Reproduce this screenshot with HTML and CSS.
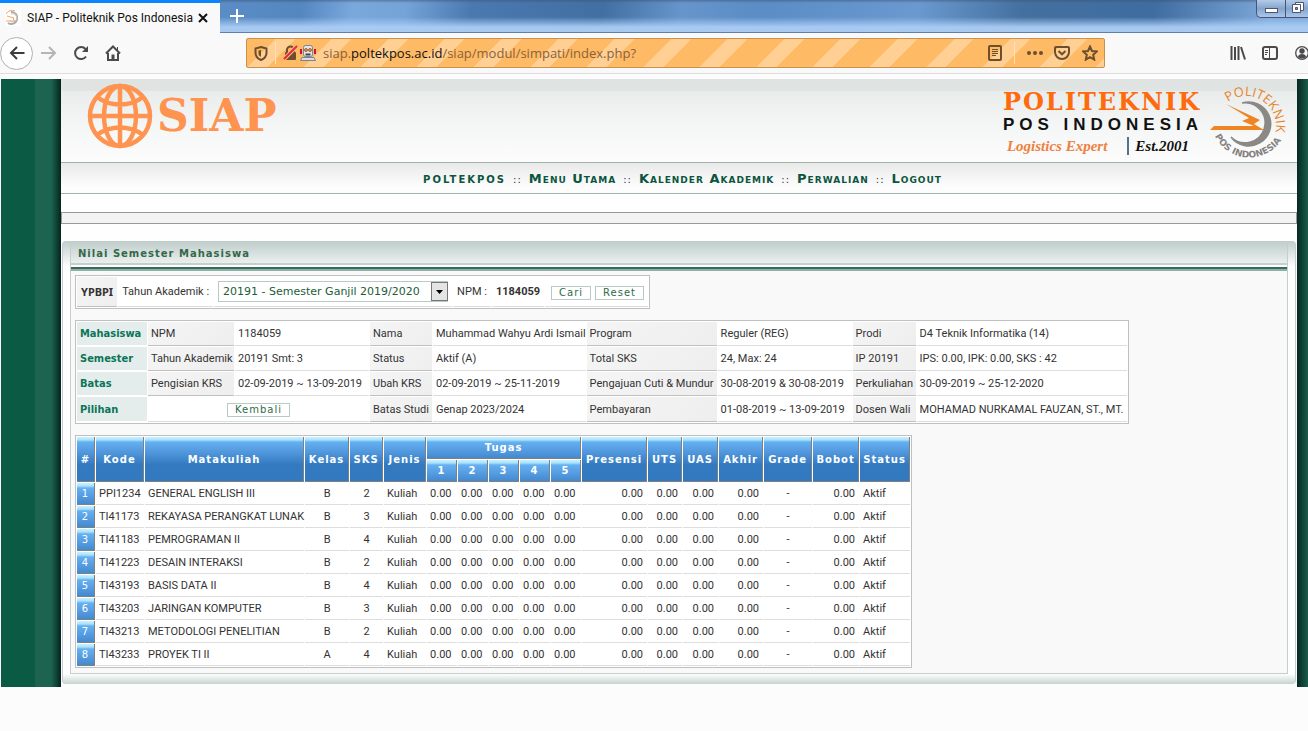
FILE: index.html
```html
<!DOCTYPE html>
<html lang="id">
<head>
<meta charset="utf-8">
<title>SIAP - Politeknik Pos Indonesia</title>
<link rel="stylesheet" href="styles.css">
</head>
<body>
<header class="browser">
  <div class="titlebar">
    <div class="tab">
      <svg class="favicon" viewBox="0 0 16 16"><rect width="16" height="16" fill="#fff"/><path d="M6 2a6 6 0 1 1-3 11" fill="none" stroke="#aaa" stroke-width="2"/><path d="M6 4a4.200 4.200 0 1 1-1 7" fill="none" stroke="#ccc" stroke-width="1"/><path d="M1 4a7 7 0 0 1 9-3M2 6l7 2-1 1 2 2H1" fill="none" stroke="#f4a56a"/></svg>
      <span class="tab-title">SIAP - Politeknik Pos Indonesia</span>
      <button class="plain" aria-label="Close tab"><svg width="10" height="10" viewBox="0 0 10 10"><path d="M1 1l8 8M9 1L1 9" stroke="#111" stroke-width="2"/></svg></button>
    </div>
    <button class="plain new-tab" aria-label="New tab"><svg width="14" height="14" viewBox="0 0 14 14"><path d="M7 0v14M0 7h14" stroke="#fff" stroke-width="2"/></svg></button>
    <div class="window-buttons">
      <button class="plain" aria-label="Minimize"><svg width="28" height="17" viewBox="0 0 28 17"><rect x="8.500" y="8.500" width="12" height="4" fill="#fff" stroke="#4b5670"/></svg></button>
      <button class="plain" aria-label="Restore"><svg width="22" height="17" viewBox="0 0 22 17"><path d="M9.500 2.500h8v8h-8z" fill="#fff" stroke="#4b5670"/><path d="M6.500 4.500h8v8h-8z" fill="#fff" stroke="#4b5670"/><path d="M9.500 7.500h2v2h-2z" fill="#7f9cc4" stroke="#4b5670"/></svg></button>
    </div>
  </div>
  <div class="toolbar">
    <div class="nav-buttons">
      <button class="plain back" aria-label="Back"><svg width="16" height="14" viewBox="0 0 16 14"><path d="M15.500 7H2M8 1L2 7l6 6" fill="none" stroke="#3c3c3e" stroke-width="2"/></svg></button>
      <button class="plain" aria-label="Forward"><svg width="16" height="14" viewBox="0 0 16 14"><path d="M0 7h14M8 1l6 6-6 6" fill="none" stroke="#b5b5b6" stroke-width="2"/></svg></button>
      <button class="plain" aria-label="Reload"><svg width="16" height="16" viewBox="0 0 16 16"><path d="M13 11.500A6 6 0 1 1 12.500 4" fill="none" stroke="#4a4a4c" stroke-width="2"/><path d="M15 1v6H9z" fill="#4a4a4c"/></svg></button>
      <button class="plain" aria-label="Home"><svg width="16" height="16" viewBox="0 0 16 16"><path d="M1 8.500L8 1.500l7 7M3 8v7h10V8" fill="none" stroke="#4a4a4c" stroke-width="2"/><path d="M6.500 15V9.500h3V15" fill="#4a4a4c"/><path d="M12 2h1v3h-1z" fill="#4a4a4c"/></svg></button>
    </div>
    <div class="address">
      <svg width="14" height="15" viewBox="0 0 14 15"><path d="M7 1l5.500 1.500V7c0 3.500-2.500 5.700-5.500 7-3-1.300-5.500-3.500-5.500-7V2.500z" fill="none" stroke="#6b5030" stroke-width="2"/><path d="M7 4v7C5.300 10 4.500 9 4.500 7V4.500z" fill="#6b5030"/></svg>
      <i class="divider"></i>
      <svg class="lock" width="16" height="16" viewBox="0 0 16 16"><path d="M4 8V5a3.500 3.500 0 0 1 7 0v3" fill="none" stroke="#6b5030" stroke-width="2"/><rect x="2" y="7" width="11" height="8" rx="1" fill="#6b5030"/><path d="M1 14L14 1" stroke="#ffbd6b" stroke-width="4"/><path d="M1 14L14 1" stroke="#f0204c" stroke-width="2"/></svg>
      <svg width="16" height="16" viewBox="0 0 16 16"><path d="M0 4h2v5H0zM14 4h2v5h-2z" fill="#c8143c"/><rect x="3.500" y=".5" width="9" height="11" rx="2" fill="#dfe6ee" stroke="#7b8591"/><circle cx="6" cy="5" r="1.500" fill="#f7931e" stroke="#70402a" stroke-width=".7"/><circle cx="10" cy="5" r="1.500" fill="#f7931e" stroke="#70402a" stroke-width=".7"/><path d="M5.500 8.500h5v2h-5z" fill="#444"/><path d="M2 12.500h12l1.500 3H.5z" fill="#d5dce5" stroke="#7b8591"/></svg>
      <label class="url" for="url"><span>siap.</span><b>poltekpos.ac.id</b><span>/siap/modul/simpati/index.php?</span></label>
      <input id="url" class="url-input" type="text" aria-label="Address">
      <svg width="14" height="16" viewBox="0 0 14 16"><rect x="1" y="1" width="12" height="14" rx="1" fill="none" stroke="#6b5030" stroke-width="2"/><path d="M4 4.500h6M4 6.500h6M4 8.500h6M4 10.500h4" stroke="#6b5030"/></svg>
      <i class="divider far"></i>
      <svg class="dots" width="16" height="4" viewBox="0 0 16 4"><circle cx="2" cy="2" r="2" fill="#6b5030"/><circle cx="8" cy="2" r="2" fill="#6b5030"/><circle cx="14" cy="2" r="2" fill="#6b5030"/></svg>
      <svg width="16" height="14" viewBox="0 0 16 14"><path d="M2 1h12a1 1 0 0 1 1 1v4A7 7 0 0 1 1 6V2a1 1 0 0 1 1-1z" fill="none" stroke="#6b5030" stroke-width="2"/><path d="M4.500 5L8 8.300 11.500 5" fill="none" stroke="#6b5030" stroke-width="2"/></svg>
      <svg class="star" width="16" height="16" viewBox="0 0 16 16"><path d="M8 1.500l2 4.500 4.800.500-3.600 3.300 1 4.800L8 12.200l-4.200 2.400 1-4.800L1.200 6.500 6 6z" fill="none" stroke="#6b5030" stroke-width="2"/></svg>
    </div>
    <div class="tools">
      <button class="plain" aria-label="Library"><svg width="16" height="14" viewBox="0 0 16 14"><path d="M1.500 0v14M5 1v13M8.500 0v14M11 1l4 12.500" stroke="#4a4a4c" stroke-width="2"/></svg></button>
      <button class="plain" aria-label="Sidebar"><svg width="16" height="14" viewBox="0 0 16 14"><rect x="1" y="1" width="14" height="12" rx="2" fill="none" stroke="#4a4a4c" stroke-width="2"/><path d="M7.500 1v12M3 4.500h3M3 6.500h3M3 8.500h2" stroke="#4a4a4c"/></svg></button>
      <button class="plain" aria-label="Account"><svg width="14" height="14" viewBox="0 0 14 14"><circle cx="7" cy="7" r="6.300" fill="none" stroke="#4a4a4c" stroke-width="1.300"/><circle cx="7" cy="5" r="2.700" fill="#4a4a4c"/><path d="M3 11c0-4 8-4 8 0a6 6 0 0 1-8 0z" fill="#4a4a4c"/></svg></button>
    </div>
  </div>
</header>

<div class="site">
  <main class="page">
    <div class="banner">
      <div class="brand">
        <svg width="66" height="66" viewBox="0 0 66 66" fill="none" stroke="#ff9350" stroke-width="4.500"><circle cx="33" cy="33" r="30"/><ellipse cx="33" cy="33" rx="16" ry="30"/><path d="M33 3v60M2 33h62M10 14c13 10 33 10 46 0M10 52c13-10 33-10 46 0"/></svg>
        <span class="brand-name">SIAP</span>
      </div>
      <div class="campus">
        <div class="campus-text">
          <div class="campus-name">POLITEKNIK</div>
          <div class="campus-sub">POS INDONESIA</div>
          <div class="campus-motto"><span class="motto">Logistics Expert</span><span class="est">Est.2001</span></div>
        </div>
        <svg class="seal" width="82" height="78" viewBox="0 0 82 78">
          <path d="M34 21A20 20 0 1 1 23 55A22 22 0 1 0 34 21z" fill="#8b8885" stroke="#8b8885" stroke-width="1.500"/>
          <path d="M18 22L52 38 46 42 56 48H2L6 44 46 44 34 39 41 36z" fill="#f08322"/>
          <path id="arc-top" d="M20 20A30 30 0 0 1 65 57" fill="none"/>
          <path id="arc-bottom" d="M7 54A38 38 0 0 0 74 57" fill="none"/>
          <text class="seal-top"><textPath href="#arc-top">POLITEKNIK</textPath></text>
          <text class="seal-bottom"><textPath href="#arc-bottom">POS INDONESIA</textPath></text>
        </svg>
      </div>
    </div>
    <nav class="menu">
      <a class="home" href="#">POLTEKPOS</a><span>::</span><a href="#">Menu Utama</a><span>::</span><a href="#">Kalender Akademik</a><span>::</span><a href="#">Perwalian</a><span>::</span><a href="#">Logout</a>
    </nav>
    <div class="notice"></div>

    <section class="panel">
      <div class="panel-inner">
        <h1>Nilai Semester Mahasiswa</h1>
        <div class="stripe"></div>
        <div class="content">
          <form>
            <table class="grid filter">
              <tr>
                <th class="soft">YPBPI</th>
                <td><label for="term">Tahun Akademik :</label></td>
                <td><span class="picker"><select id="term"><option>20191 - Semester Ganjil 2019/2020</option></select><svg class="arrow" width="17" height="19" viewBox="0 0 17 19"><rect x=".5" y=".5" width="16" height="18" fill="#e4e4e4" stroke="#777"/><path d="M5 8h7l-3.500 4z" fill="#000"/></svg></span></td>
                <td>NPM :</td>
                <td><b>1184059</b></td>
                <td class="actions"><button class="btn" type="button">Cari</button><button class="btn" type="reset">Reset</button></td>
              </tr>
            </table>
          </form>

          <table class="grid info">
            <colgroup><col class="w70"><col class="w86"><col class="w134"><col class="w62"><col class="w151"><col class="w130"><col class="w134"><col class="w63"><col class="w210"></colgroup>
            <tr><th>Mahasiswa</th><td class="soft">NPM</td><td>1184059</td><td class="soft">Nama</td><td>Muhammad Wahyu Ardi Ismail</td><td class="soft">Program</td><td>Reguler (REG)</td><td class="soft">Prodi</td><td>D4 Teknik Informatika (14)</td></tr>
            <tr><th>Semester</th><td class="soft">Tahun Akademik</td><td>20191 Smt: 3</td><td class="soft">Status</td><td>Aktif (A)</td><td class="soft">Total SKS</td><td>24, Max: 24</td><td class="soft">IP 20191</td><td>IPS: 0.00, IPK: 0.00, SKS : 42</td></tr>
            <tr><th>Batas</th><td class="soft">Pengisian KRS</td><td>02-09-2019 ~ 13-09-2019</td><td class="soft">Ubah KRS</td><td>02-09-2019 ~ 25-11-2019</td><td class="soft">Pengajuan Cuti &amp; Mundur</td><td>30-08-2019 &amp; 30-08-2019</td><td class="soft">Perkuliahan</td><td>30-09-2019 ~ 25-12-2020</td></tr>
            <tr><th>Pilihan</th><td class="mid" colspan="2"><button class="btn" type="button">Kembali</button></td><td class="soft">Batas Studi</td><td>Genap 2023/2024</td><td class="soft">Pembayaran</td><td>01-08-2019 ~ 13-09-2019</td><td class="soft">Dosen Wali</td><td>MOHAMAD NURKAMAL FAUZAN, ST., MT.</td></tr>
          </table>

          <table class="grid grades">
            <colgroup><col class="w18"><col class="w48"><col class="w157"><col class="w44"><col class="w33"><col class="w42"><col class="w30" span="5"><col class="w65"><col class="w34"><col class="w35"><col class="w44"><col class="w48"><col class="w46"><col class="w50"></colgroup>
            <thead>
              <tr><th rowspan="2">#</th><th rowspan="2">Kode</th><th rowspan="2">Matakuliah</th><th rowspan="2">Kelas</th><th rowspan="2">SKS</th><th rowspan="2">Jenis</th><th colspan="5">Tugas</th><th rowspan="2">Presensi</th><th rowspan="2">UTS</th><th rowspan="2">UAS</th><th rowspan="2">Akhir</th><th rowspan="2">Grade</th><th rowspan="2">Bobot</th><th rowspan="2">Status</th></tr>
              <tr><th>1</th><th>2</th><th>3</th><th>4</th><th>5</th></tr>
            </thead>
            <tbody>
              <tr><th>1</th><td>PPI1234</td><td>GENERAL ENGLISH III</td><td class="mid">B</td><td class="mid">2</td><td>Kuliah</td><td>0.00</td><td>0.00</td><td>0.00</td><td>0.00</td><td>0.00</td><td class="num">0.00</td><td class="num">0.00</td><td class="num">0.00</td><td class="num">0.00</td><td class="mid">-</td><td class="num">0.00</td><td>Aktif</td></tr>
              <tr><th>2</th><td>TI41173</td><td>REKAYASA PERANGKAT LUNAK</td><td class="mid">B</td><td class="mid">3</td><td>Kuliah</td><td>0.00</td><td>0.00</td><td>0.00</td><td>0.00</td><td>0.00</td><td class="num">0.00</td><td class="num">0.00</td><td class="num">0.00</td><td class="num">0.00</td><td class="mid">-</td><td class="num">0.00</td><td>Aktif</td></tr>
              <tr><th>3</th><td>TI41183</td><td>PEMROGRAMAN II</td><td class="mid">B</td><td class="mid">4</td><td>Kuliah</td><td>0.00</td><td>0.00</td><td>0.00</td><td>0.00</td><td>0.00</td><td class="num">0.00</td><td class="num">0.00</td><td class="num">0.00</td><td class="num">0.00</td><td class="mid">-</td><td class="num">0.00</td><td>Aktif</td></tr>
              <tr><th>4</th><td>TI41223</td><td>DESAIN INTERAKSI</td><td class="mid">B</td><td class="mid">2</td><td>Kuliah</td><td>0.00</td><td>0.00</td><td>0.00</td><td>0.00</td><td>0.00</td><td class="num">0.00</td><td class="num">0.00</td><td class="num">0.00</td><td class="num">0.00</td><td class="mid">-</td><td class="num">0.00</td><td>Aktif</td></tr>
              <tr><th>5</th><td>TI43193</td><td>BASIS DATA II</td><td class="mid">B</td><td class="mid">4</td><td>Kuliah</td><td>0.00</td><td>0.00</td><td>0.00</td><td>0.00</td><td>0.00</td><td class="num">0.00</td><td class="num">0.00</td><td class="num">0.00</td><td class="num">0.00</td><td class="mid">-</td><td class="num">0.00</td><td>Aktif</td></tr>
              <tr><th>6</th><td>TI43203</td><td>JARINGAN KOMPUTER</td><td class="mid">B</td><td class="mid">3</td><td>Kuliah</td><td>0.00</td><td>0.00</td><td>0.00</td><td>0.00</td><td>0.00</td><td class="num">0.00</td><td class="num">0.00</td><td class="num">0.00</td><td class="num">0.00</td><td class="mid">-</td><td class="num">0.00</td><td>Aktif</td></tr>
              <tr><th>7</th><td>TI43213</td><td>METODOLOGI PENELITIAN</td><td class="mid">B</td><td class="mid">2</td><td>Kuliah</td><td>0.00</td><td>0.00</td><td>0.00</td><td>0.00</td><td>0.00</td><td class="num">0.00</td><td class="num">0.00</td><td class="num">0.00</td><td class="num">0.00</td><td class="mid">-</td><td class="num">0.00</td><td>Aktif</td></tr>
              <tr><th>8</th><td>TI43233</td><td>PROYEK TI II</td><td class="mid">A</td><td class="mid">4</td><td>Kuliah</td><td>0.00</td><td>0.00</td><td>0.00</td><td>0.00</td><td>0.00</td><td class="num">0.00</td><td class="num">0.00</td><td class="num">0.00</td><td class="num">0.00</td><td class="mid">-</td><td class="num">0.00</td><td>Aktif</td></tr>
            </tbody>
          </table>
        </div>
      </div>
    </section>
  </main>
</div>
</body>
</html>
```

FILE: styles.css
```css
* { box-sizing: border-box; }
body {
  margin: 0;
  background: #fcfcfc;
  color: #333;
  font: 11px/14px Roboto, "Liberation Sans", sans-serif;
  overflow-x: hidden;
}
svg { display: block; flex: none; }
.plain { border: 0; padding: 0; background: none; display: flex; align-items: center; justify-content: center; }

/* browser window */
.titlebar {
  display: flex;
  height: 33px;
  border-bottom: 1px solid #6080ac;
  background:
    linear-gradient(180deg, rgba(60,80,110,.5) 0, rgba(60,80,110,0) 3px, rgba(170,205,245,0) 17px, rgba(170,205,245,.95) 27px, #a9c9ee 100%),
    linear-gradient(100deg, #6c97cb 0, #5a8cc6 17%, #5486c0 23%, #79a8dd 27%, #74a3d8 31%, #4a79b0 36%, #426fa3 46%, #6595cb 52%, #5b8cc5 58%, #6a99d0 70%, #44709f 78%, #3f6ca1 88%, #7fa9da 97%);
}
.tab {
  display: flex;
  align-items: center;
  width: 220px;
  height: 33px;
  padding: 0 12px 0 5px;
  border-top: 3px solid #0a84ff;
  background: #f9f9f9;
}
.favicon { width: 16px; height: 16px; margin-right: 6px; }
.tab-title { flex: 1; font-size: 12px; color: #111; white-space: nowrap; }
.new-tab { width: 34px; height: 32px; }
.window-buttons {
  display: flex;
  height: 18px;
  margin-left: auto;
  border: 1px solid #46557a;
  border-width: 0 0 1px 1px;
  border-radius: 0 0 0 5px;
  background: linear-gradient(#b3cbe8, #86a5cc 50%, #a9c6ea);
}
.window-buttons button + button { border-left: 1px solid #46557a; }
.toolbar {
  display: flex;
  align-items: center;
  height: 41px;
  border-bottom: 1px solid #ddd;
  background: #f9f9fa;
}
.nav-buttons { display: flex; align-items: center; gap: 16px; width: 246px; }
.back { width: 33px; height: 33px; border: 1px solid #b0b0b0; border-radius: 50%; background: #fff; }
.nav-buttons .back { margin-right: -8px; }
.address {
  position: relative;
  flex: 1;
  display: flex;
  align-items: center;
  gap: 7px;
  height: 30px;
  padding: 0 6px 0 7px;
  border: 1px solid #c8914c;
  border-radius: 2px;
  background: repeating-linear-gradient(135deg, #ffba66 0, #ffba66 20px, #ffcf94 20px, #ffcf94 34px, #ffba66 34px, #ffba66 40px);
}
.divider { width: 1px; height: 22px; background: #ffe0b8; }
.divider.far { margin-left: 5px; }
.lock { margin-right: -6px; }
.url { flex: 1; font: 13px/18px "Open Sans", "Noto Sans", sans-serif; color: #8a6238; white-space: nowrap; }
.url b { font-weight: 400; color: #111; }
.url-input { position: absolute; left: 72px; top: 0; width: 60%; height: 28px; border: 0; background: transparent; }
.dots { margin: 0 4px 0 5px; }
.star { margin-left: 5px; }
.tools { display: flex; align-items: center; gap: 16px; width: 203px; padding-left: 125px; }
.tools button { flex: none; width: 16px; }

/* page frame */
.site {
  display: flex;
  margin: 5px 0 0 1px;
  padding: 0 11px 0 60px;
  background:
    linear-gradient(90deg, #0b5a44 0, #0b5a44 34px, #1c644f 34px, #1c644f 50px, #0b4032 56px, #07221c 60px) left / 60px 100% no-repeat,
    linear-gradient(90deg, #072820, #1a5c49) right / 11px 100% no-repeat;
}
.page { flex: 1; min-width: 0; background: linear-gradient(#fff, #fcfcfc); padding-bottom: 3px; }
.banner {
  display: flex;
  justify-content: space-between;
  height: 84px;
  padding: 3px 7px 0 26px;
  border-bottom: 1px solid #9fb5ac;
  background: linear-gradient(#dfe4e2, #e0e5e3 12px, #e8eceb 12px, #f4f6f5 45px, #fcfcfc);
}
.brand { display: flex; align-items: center; gap: 4px; height: 68px; color: #ff9350; }
.brand-name { font: 700 44px/48px "DejaVu Serif", serif; }
.campus { display: flex; gap: 5px; }
.campus-text { padding-top: 6px; white-space: nowrap; }
.campus-name { font: 700 24px/28px "DejaVu Serif", serif; letter-spacing: 2px; color: #ff6a0c; }
.campus-sub { font: 700 17px/18px "Liberation Sans", sans-serif; letter-spacing: 5px; color: #111; }
.campus-motto { display: flex; align-items: center; gap: 20px; padding: 2px 8px 0 4px; }
.motto { font: italic 700 15px/20px "Liberation Serif", serif; color: #f08040; }
.est { padding-left: 6px; border-left: 2px solid #54728a; font: italic 700 15px/18px "Liberation Serif", serif; color: #111; }
.seal-top { font: 13px "Open Sans", sans-serif; fill: #e8842c; }
.seal-bottom { font: 700 9px "DejaVu Sans", sans-serif; fill: #85817e; }
.menu {
  display: flex;
  align-items: baseline;
  justify-content: center;
  gap: 7px;
  height: 31px;
  padding: 9px 0 0 7px;
  border-bottom: 1px solid #9fb5ac;
  background: linear-gradient(#e9e9e9, #fdfdfd 80%);
  font: 700 13px/14px "DejaVu Sans", sans-serif;
  letter-spacing: 1px;
}
.menu a { color: #0b5540; text-decoration: none; font-variant: small-caps; }
.menu .home { font-size: 10px; letter-spacing: 2px; }
.menu span { font-size: 10px; font-weight: 400; }
.notice { height: 12px; margin: 18px 0 17px; border: 1px solid #999; background: #f3f3f3; }

/* content panel */
.panel {
  margin: 0 1px;
  padding: 0 7px 10px;
  border-right: 1px solid #c4cecc;
  border-left: 1px solid #c4cecc;
  border-radius: 4px;
  background:
    linear-gradient(#c0cecb, rgba(255,255,255,0)) top / 100% 26px no-repeat,
    linear-gradient(rgba(255,255,255,0), #c6d3cf) bottom / 100% 10px no-repeat,
    #fff;
}
.panel-inner { border: 1px solid #c4cecc; border-top: 0; }
h1 {
  margin: 0;
  padding: 6px 7px 2px;
  border-bottom: 2px solid #c4d0cd;
  background: linear-gradient(#bfcdca, #eaefee);
  color: #356749;
  font: 700 10px/14px "DejaVu Sans", sans-serif;
  letter-spacing: 1px;
}
.stripe { height: 6px; border-top: 2px solid #fff; background: linear-gradient(#376b5c 2px, #8fb0a6 2px); }
.content { display: flex; flex-direction: column; align-items: flex-start; gap: 11px; padding: 4px 4px 5px; background: #f9f9f9; }

/* tables */
.grid { border: 1px solid #c0c0c0; border-spacing: 1px; border-collapse: separate; background: #fff; }
.grid td, .grid th { height: 22px; padding: 1px 0 0 3px; border-bottom: 1px solid #ddd; white-space: nowrap; text-align: left; }
.grid .soft { border-bottom-color: #c0c0c0; background: linear-gradient(135deg, #f5f5f5, #eee); }
.grid .mid { padding: 1px 0 0; text-align: center; }
.grid .num { padding-right: 4px; text-align: right; }
.grid.filter td, .grid.filter th { height: 30px; padding: 0 4px; }
.grid.filter .actions { padding: 2px 4px 0 6px; }
.filter .soft { font-family: "Noto Sans", sans-serif; }
.picker { display: grid; grid-template-columns: 213px 17px; width: 230px; }
.picker select {
  grid-area: 1 / 1 / 2 / 3;
  width: 230px;
  height: 21px;
  padding: 0 4px;
  border: 1px solid #b9c9c6;
  appearance: none;
  background: #fff;
  color: #1b5e37;
  font: 11px/14px "DejaVu Sans", sans-serif;
}
.arrow { grid-area: 1 / 2; align-self: center; pointer-events: none; }
.btn {
  height: 14px;
  padding: 0 7px;
  border: 1px solid #b9c9c6;
  background: #fff;
  color: #2d6b49;
  font: 10px/12px "DejaVu Sans", sans-serif;
  letter-spacing: 1px;
}
.btn + .btn { margin-left: 4px; }
.grid.info td, .grid.info th { height: 24px; }
.grid.info tr:last-child > * { height: 25px; }
.info th { border-bottom: 1px solid #fff; background: #e4edeb; color: #0b7558; font: 700 11px/14px "DejaVu Sans Condensed", "Noto Sans", sans-serif; }
.grid.grades th {
  padding: 1px 0 0;
  border-right: 1px solid #808080;
  border-bottom: 1px solid #808080;
  background: linear-gradient(#cdf0ff 0, #a5e2fd 3px, #64b0f0 5px, #5ca3e8 10px, #3379bf 28px);
  color: #fff;
  text-align: center;
  font: 700 10px/14px "DejaVu Sans", sans-serif;
  letter-spacing: 1px;
}
.grid.grades tbody th { font-weight: 400; }
.w18 { width: 18px; } .w30 { width: 30px; } .w33 { width: 33px; } .w34 { width: 34px; }
.w35 { width: 35px; } .w42 { width: 42px; } .w44 { width: 44px; } .w46 { width: 46px; }
.w48 { width: 48px; } .w50 { width: 50px; } .w62 { width: 62px; } .w63 { width: 63px; }
.w65 { width: 65px; } .w70 { width: 70px; } .w86 { width: 86px; } .w130 { width: 130px; }
.w134 { width: 134px; } .w151 { width: 151px; } .w157 { width: 157px; } .w210 { width: 210px; }
```
